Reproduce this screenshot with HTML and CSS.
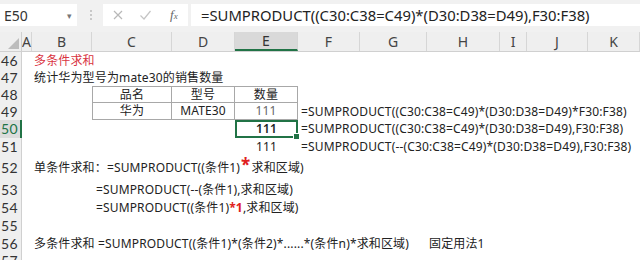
FILE: index.html
```html
<!DOCTYPE html>
<html lang="zh">
<head>
<meta charset="utf-8">
<link rel="stylesheet" href="styles.css">
</head>
<body>
<div class="app">
  <div class="toolbar">
    <div class="namebox"><span class="name">E50</span><span class="caret">▾</span></div>
    <div class="grip"></div>
    <div class="fxbox">
      <svg class="ico" width="12" height="12" viewBox="0 0 12 12"><path d="M2 2L10 10M10 2L2 10" stroke="#b8b8b8" stroke-width="1.2" fill="none"/></svg>
      <svg class="ico" width="13" height="12" viewBox="0 0 13 12"><path d="M1.5 6.5L5 10L11.5 2" stroke="#c4c4c4" stroke-width="1.2" fill="none"/></svg>
      <span class="fx">f<small>x</small></span>
    </div>
    <div class="formula">=SUMPRODUCT((C30:C38=C49)*(D30:D38=D49),F30:F38)</div>
  </div>

  <div class="sheet">
    <div class="row hdr">
      <div class="corner"></div>
      <div class="ch">A</div><div class="ch">B</div><div class="ch">C</div><div class="ch">D</div>
      <div class="ch sel">E</div><div class="ch">F</div><div class="ch">G</div><div class="ch">H</div>
      <div class="ch">I</div><div class="ch">J</div><div class="ch">K</div>
    </div>

    <div class="row r17">
      <div class="rh">46</div>
      <div class="c cB span-all red">多条件求和</div>
    </div>
    <div class="row r17">
      <div class="rh">47</div>
      <div class="c cB span-all">统计华为型号为mate30的销售数量</div>
    </div>
    <div class="row r17">
      <div class="rh">48</div>
      <div class="c cC ctr tb tl tt">品名</div>
      <div class="c cD ctr tb tt">型号</div>
      <div class="c cE ctr tb tt tr">数量</div>
    </div>
    <div class="row r17">
      <div class="rh">49</div>
      <div class="c cC ctr tb tl">华为</div>
      <div class="c cD ctr tb">MATE30</div>
      <div class="c cE ctr tb tr dim">111</div>
      <div class="c cF span-all">=SUMPRODUCT((C30:C38=C49)*(D30:D38=D49)*F30:F38)</div>
    </div>
    <div class="row r18">
      <div class="rh rsel">50</div>
      <div class="c cE ctr active">111<span class="handle"></span></div>
      <div class="c cF span-all">=SUMPRODUCT((C30:C38=C49)*(D30:D38=D49),F30:F38)</div>
    </div>
    <div class="row r17">
      <div class="rh">51</div>
      <div class="c cE ctr">111</div>
      <div class="c cF span-all">=SUMPRODUCT(--(C30:C38=C49)*(D30:D38=D49),F30:F38)</div>
    </div>
    <div class="row r26">
      <div class="rh">52</div>
      <div class="c cB span-all">单条件求和：=SUMPRODUCT((条件1) <span class="star">*</span>求和区域)</div>
    </div>
    <div class="row r18">
      <div class="rh">53</div>
      <div class="c cC span-all">=SUMPRODUCT(--(条件1),求和区域)</div>
    </div>
    <div class="row r18">
      <div class="rh">54</div>
      <div class="c cC span-all">=SUMPRODUCT((条件1)<b class="redb">*1</b>,求和区域)</div>
    </div>
    <div class="row r18">
      <div class="rh">55</div>
    </div>
    <div class="row r17">
      <div class="rh">56</div>
      <div class="c cB span-bg">多条件求和 =SUMPRODUCT((条件1)*(条件2)*......*(条件n)*求和区域)</div>
      <div class="c cH span-hk">固定用法1</div>
    </div>
    <div class="row r17">
      <div class="rh">57</div>
    </div>
  </div>
</div>
</body>
</html>
```

FILE: styles.css
```css
html, body {
  margin: 0;
  padding: 0;
  background: #ffffff;
}

.app {
  width: 640px;
  height: 260px;
  overflow: hidden;
  font-family: "Noto Sans", "Noto Sans CJK SC", sans-serif;
  color: #222;
}

/* ---------- formula toolbar ---------- */
.toolbar {
  height: 32px;
  background: #f1f1f1;
  display: flex;
  align-items: center;
  box-sizing: border-box;
  padding-bottom: 2px;
}

.namebox {
  width: 77px;
  height: 22px;
  background: #fff;
  box-sizing: border-box;
  display: flex;
  align-items: center;
  justify-content: space-between;
  padding: 0 5px 0 4px;
}

.name {
  font-size: 14px;
  color: #333;
}

.caret {
  font-size: 9px;
  color: #777;
}

.grip {
  width: 2px;
  height: 12px;
  margin: 0 11px 0 13px;
  background-image: radial-gradient(circle, #c8c8c8 45%, transparent 55%);
  background-size: 2px 4px;
}

.fxbox {
  width: 85px;
  height: 22px;
  background: #fff;
  display: flex;
  align-items: center;
  box-sizing: border-box;
  padding-left: 9px;
  gap: 15px;
}

.fx {
  font-family: "Liberation Serif", serif;
  font-style: italic;
  font-size: 13px;
  color: #666;
  margin-left: 3px;
}

.fx small {
  font-size: 9px;
}

.formula {
  flex: 1;
  height: 22px;
  margin-left: 3px;
  background: #fff;
  display: flex;
  align-items: center;
  padding-left: 10px;
  font-size: 14.8px;
  color: #222;
  white-space: nowrap;
}

/* ---------- sheet ---------- */
.sheet {
  display: flex;
  flex-direction: column;
}

.row {
  display: grid;
  grid-template-columns: 22px 10px 60px 80px 63px 63px 62px 67px 73px 27px 61px 52px;
  font-size: 12px;
  letter-spacing: 0.15px;
  line-height: 14px;
}

.r17 { height: 17px; }
.r18 { height: 18px; }
.r26 { height: 26px; }

.hdr {
  height: 20px;
  background: #efefef;
  border-bottom: 1px solid #d0d0d0;
  box-sizing: border-box;
  letter-spacing: 0;
}

.corner {
  position: relative;
  border-right: 1px solid #d0d0d0;
}

.corner::after {
  content: "";
  position: absolute;
  right: 2px;
  bottom: 2px;
  border-style: solid;
  border-width: 0 0 11px 11px;
  border-color: transparent transparent #bdbdbd transparent;
}

.ch {
  display: flex;
  align-items: center;
  justify-content: center;
  font-size: 14px;
  color: #444;
  border-right: 1px solid #d6d6d6;
  box-sizing: border-box;
}

.ch.sel {
  background: #d9d9d9;
  border-bottom: 2px solid #217346;
  color: #333;
}

.rh {
  grid-column: 1;
  background: #efefef;
  border-right: 1px solid #d0d0d0;
  box-sizing: border-box;
  display: flex;
  align-items: center;
  padding-left: 1px;
  font-family: "Lato", "Noto Sans", sans-serif;
  font-size: 14px;
  line-height: 14px;
  letter-spacing: 0.3px;
  color: #333;
}

.rh.rsel {
  background: #dcdcdc;
  color: #217346;
  border-right: 2px solid #217346;
}

.c {
  display: flex;
  align-items: center;
  white-space: nowrap;
  padding-left: 2px;
  box-sizing: border-box;
  min-width: 0;
}

.cB { grid-column: 3; }
.cC { grid-column: 4; padding-left: 4px; }
.cD { grid-column: 5; }
.cE { grid-column: 6; }
.cF { grid-column: 7; padding-left: 3px; }
.cH { grid-column: 9; }

.span-all { grid-column-end: -1; }
.span-bg { grid-column-end: 9; }
.span-hk { grid-column-end: -1; }

.ctr {
  justify-content: center;
  padding-left: 0;
}

.tb {
  border-bottom: 1px solid #a8a8a8;
  border-right: 1px solid #a8a8a8;
}
.tl { border-left: 1px solid #a8a8a8; }
.tt { border-top: 1px solid #a8a8a8; }

.red { color: #d9333f; }
.dim { color: #666; }

.active {
  position: relative;
  border: 2px solid #217346;
  font-weight: 600;
}

.handle {
  position: absolute;
  right: -4px;
  bottom: -4px;
  width: 5px;
  height: 5px;
  background: #217346;
  border: 1px solid #fff;
}

.star {
  color: #e02020;
  font-size: 17px;
  font-weight: 700;
  position: relative;
  top: -3px;
  margin: 0 1px;
}

.redb {
  color: #e02020;
  font-weight: 700;
}
```
